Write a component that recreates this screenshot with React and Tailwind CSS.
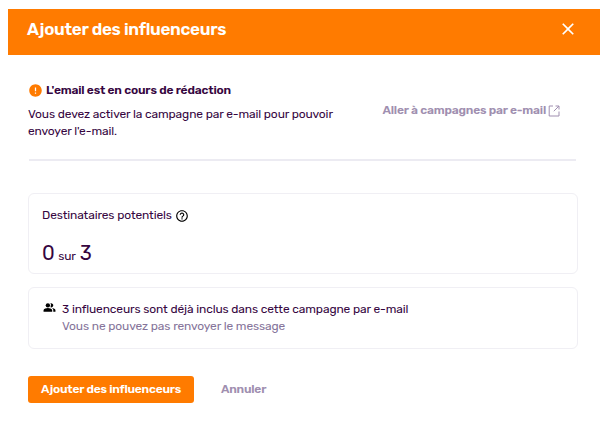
import { useState } from "react";
import { MdClose, MdError, MdHelpOutline, MdPeopleAlt } from "react-icons/md";

function ExternalLinkIcon({ className }) {
  return (
    <svg viewBox="0 0 12 12" fill="none" stroke="currentColor" className={className}>
      <path d="M5 1H1.2V11H11V6.5" />
      <path d="M7.5 1H11V4.5M11 1L5.8 6.2" />
    </svg>
  );
}

function ModalHeader({ title, onClose }) {
  return (
    <header className="mr-3 ml-2 flex h-[46px] items-center justify-between bg-[#ff7b00] pr-[22px] pb-[7px] pl-[19px] text-white">
      <h1 className="text-[17px] leading-5 font-semibold tracking-[-0.3px]">{title}</h1>
      <button type="button" aria-label="Fermer" onClick={onClose}>
        <MdClose size={20} />
      </button>
    </header>
  );
}

function DraftNotice() {
  return (
    <section className="flex items-center justify-between">
      <div>
        <div className="flex h-4 items-center">
          <MdError size={15} className="shrink-0 text-[#ff7b00]" />
          <h2 className="ml-[3px] text-xs font-semibold tracking-[-0.2px] whitespace-nowrap">
            L'email est en cours de rédaction
          </h2>
        </div>
        <p className="mt-2 w-[320px] text-xs leading-[17px] tracking-[-0.13px]">
          Vous devez activer la campagne par e-mail pour pouvoir
          <br />
          envoyer l'e-mail.
        </p>
      </div>
      <a
        href="#"
        className="mr-[18px] flex items-center pb-0.5 text-xs font-semibold tracking-[-0.2px] whitespace-nowrap text-[#a08fb0]"
      >
        Aller à campagnes par e-mail
        <ExternalLinkIcon className="mt-px ml-0.5 size-3" />
      </a>
    </section>
  );
}

function App() {
  const [isOpen, setIsOpen] = useState(true);
  const recipients = { potential: 0, total: 3 };

  const handleClose = () => setIsOpen(false);

  if (!isOpen) return null;

  return (
    <div className="h-[435px] w-[612px] overflow-hidden bg-white pt-[9px] font-['Rubik','Roboto',sans-serif] text-[#36063f]">
      <ModalHeader title="Ajouter des influenceurs" onClose={handleClose} />

      <main className="mr-[34px] ml-7 pt-[27px]">
        <DraftNotice />

        <hr className="mt-[19px] mr-0.5 ml-px border-t-2 border-[#ecebf2]" />

        <section className="mt-8 h-[81px] rounded-md border border-[#f0eff4] px-[13px] pt-[13px]">
          <div className="flex h-4 items-center text-xs tracking-[-0.13px]">
            <span>Destinataires potentiels</span>
            <MdHelpOutline size={14} className="mt-px ml-[3px] text-black" />
          </div>
          <p className="mt-4 flex items-baseline gap-1 leading-6">
            <span className="text-xl tracking-[-0.5px]">{recipients.potential}</span>
            <span className="text-xs tracking-[-0.13px]">sur</span>
            <span className="text-xl tracking-[-0.5px]">{recipients.total}</span>
          </p>
        </section>

        <section className="mt-[13px] flex h-[62px] rounded-md border border-[#f0eff4] px-[14px] pt-[13px]">
          <MdPeopleAlt size={13} className="text-black" />
          <div className="ml-[6px] text-xs leading-[17px] tracking-[-0.13px]">
            <p>{recipients.total} influenceurs sont déjà inclus dans cette campagne par e-mail</p>
            <p className="text-[#85749a]">Vous ne pouvez pas renvoyer le message</p>
          </div>
        </section>

        <footer className="mt-[27px] flex items-center gap-[27px] text-xs font-semibold tracking-[-0.23px]">
          <button type="button" className="h-[27px] w-[166px] rounded-[3px] bg-[#ff7b00] pb-0.5 text-white">
            Ajouter des influenceurs
          </button>
          <button type="button" onClick={handleClose} className="pb-0.5 text-[#a08fb0]">
            Annuler
          </button>
        </footer>
      </main>
    </div>
  );
}

export default App;
